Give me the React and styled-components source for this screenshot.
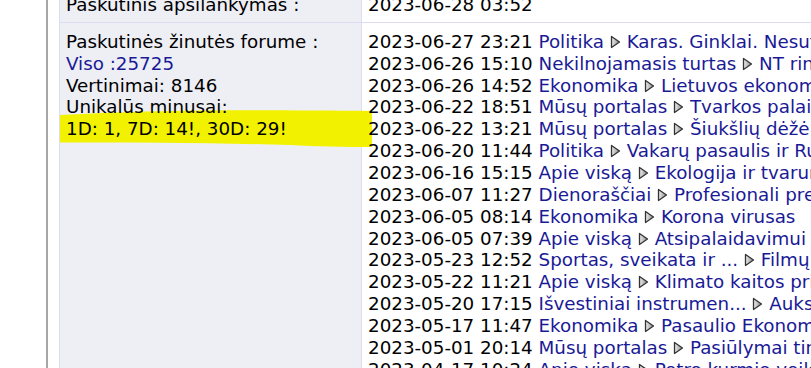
import React from "react"
import styled, { createGlobalStyle } from "styled-components"

const GlobalStyle = createGlobalStyle`
  html, body {
    margin: 0;
    padding: 0;
    background: #ffffff;
    overflow: hidden;
  }
  body {
    font-family: "DejaVu Sans", Verdana, sans-serif;
    font-size: 18.3px;
    color: #000;
  }
`

const recent = [
  ["2023-06-27 23:21", "Politika", "Karas. Ginklai. Nesutarimai"],
  ["2023-06-26 15:10", "Nekilnojamasis turtas", "NT rinka"],
  ["2023-06-26 14:52", "Ekonomika", "Lietuvos ekonomika"],
  ["2023-06-22 18:51", "Mūsų portalas", "Tvarkos palaikymas"],
  ["2023-06-22 13:21", "Mūsų portalas", "Šiukšlių dėžė"],
  ["2023-06-20 11:44", "Politika", "Vakarų pasaulis ir Rusija"],
  ["2023-06-16 15:15", "Apie viską", "Ekologija ir tvarumas"],
  ["2023-06-07 11:27", "Dienoraščiai", "Profesionali prekyba"],
  ["2023-06-05 08:14", "Ekonomika", "Korona virusas"],
  ["2023-06-05 07:39", "Apie viską", "Atsipalaidavimui"],
  ["2023-05-23 12:52", "Sportas, sveikata ir ...", "Filmų aptarimai"],
  ["2023-05-22 11:21", "Apie viską", "Klimato kaitos priežastys"],
  ["2023-05-20 17:15", "Išvestiniai instrumen...", "Auksas"],
  ["2023-05-17 11:47", "Ekonomika", "Pasaulio Ekonomika"],
  ["2023-05-01 20:14", "Mūsų portalas", "Pasiūlymai tinklapiui"],
  ["2023-04-17 10:24", "Apie viską", "Petro kurmio veikla"],
]

const Arrow = () => (
  <ArrowSvg width="11" height="14" viewBox="0 0 11 14">
    <defs>
      <linearGradient id="ag" x1="0" y1="0" x2="1" y2="0">
        <stop offset="0" stopColor="#eeeeee" />
        <stop offset="1" stopColor="#8c8c8c" />
      </linearGradient>
    </defs>
    <polygon points="1.5,1.5 9.5,7 1.5,12.5" fill="url(#ag)" stroke="#333" strokeWidth="1.3" strokeLinejoin="round" />
  </ArrowSvg>
)

const App = () => {
  return (
    <>
      <GlobalStyle />
      <Page>
        <Frame>
          <Table>
            <tbody>
              <tr>
                <LabelCell $first>
                  <Line>Paskutinis apsilankymas :</Line>
                </LabelCell>
                <ValueCell $first>
                  <Line>2023-06-28 03:52</Line>
                </ValueCell>
              </tr>
              <tr>
                <LabelCell>
                  <Line>Paskutinės žinutės forume :</Line>
                  <Line><Link href="#">Viso :25725</Link></Line>
                  <Line>Vertinimai: 8146</Line>
                  <Line>Unikalūs minusai:</Line>
                  <Line>1D: 1, 7D: 14!, 30D: 29!</Line>
                </LabelCell>
                <ValueCell>
                  {recent.map(([date, cat, topic]) => (
                    <Line key={date + topic}>
                      {date} <Link href="#">{cat}</Link> <Arrow /> <Link href="#">{topic}</Link>
                    </Line>
                  ))}
                </ValueCell>
              </tr>
            </tbody>
          </Table>
        </Frame>
        <Marker width="312" height="40" viewBox="0 0 312 40">
          <path
            d="M0 5 C40 3 90 1 140 0.5 C200 0 260 0.5 312 1 L312 37 C285 37 255 36.5 230 35 C160 33 80 32.5 0 32.5 Z"
            fill="#f2f200"
          />
        </Marker>
      </Page>
    </>
  )
}

export default App

const Page = styled.div`
  position: relative;
  width: 811px;
  height: 368px;
  overflow: hidden;
  background: #fff;
`

const Frame = styled.div`
  margin-left: 46px;
  margin-top: -12px;
  padding-left: 11px;
  border-left: 2px solid #a6a6a6;
  height: 440px;
`

const Table = styled.table`
  border-collapse: collapse;
  table-layout: fixed;
  width: 820px;
`

const LabelCell = styled.td`
  width: 289px;
  vertical-align: top;
  background: #eeeff5;
  border-left: 1px solid #dcdcf2;
  border-right: 1px solid #dcdcf2;
  border-bottom: 1px solid #dcdcf2;
  padding: ${(p) => (p.$first ? "6px" : "8px 6px 0 6px")};
  white-space: nowrap;
`

const ValueCell = styled.td`
  vertical-align: top;
  background: #fff;
  border-bottom: ${(p) => (p.$first ? "1px solid #dcdcf2" : "none")};
  padding: ${(p) => (p.$first ? "6px" : "8px 6px 0 6px")};
  white-space: nowrap;
  overflow: hidden;
`

const Line = styled.div`
  position: relative;
  z-index: 2;
  height: 21.87px;
  line-height: 21.87px;
  white-space: nowrap;
`

const Link = styled.a`
  color: #1a1a96;
  text-decoration: none;
`

const ArrowSvg = styled.svg`
  vertical-align: -1px;
`

const Marker = styled.svg`
  position: absolute;
  left: 60px;
  top: 110px;
  z-index: 1;
  pointer-events: none;
`
